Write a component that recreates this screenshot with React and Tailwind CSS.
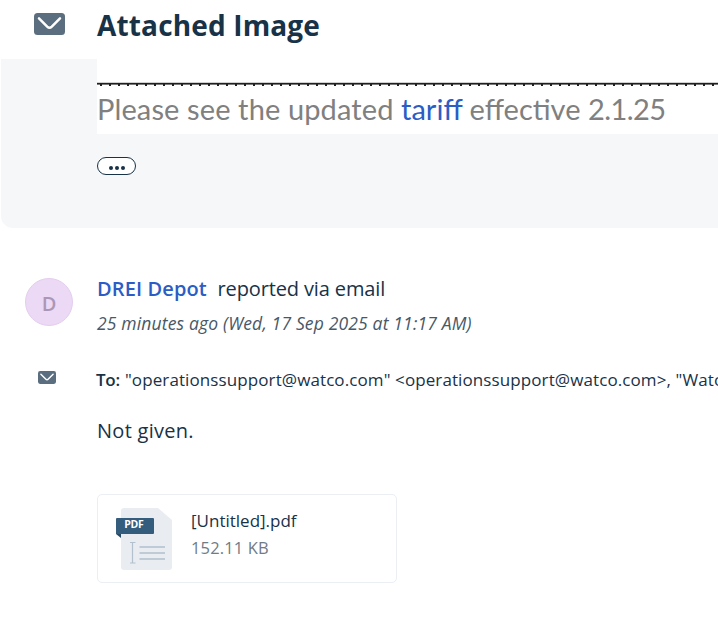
import React from "react";

function Mail({ className }) {
  return (
    <svg className={className} viewBox="0 0 31 22" fill="none">
      <rect width="31" height="22" rx="3.5" fill="#5a6e80" />
      <path d="M5 5.3 L13.2 13.6 Q15.5 15.8 17.8 13.6 L26 5.3" stroke="#fff" strokeWidth="2.5" strokeLinecap="round" />
    </svg>
  );
}

function PdfIcon() {
  return (
    <svg className="block h-[62px] w-[56px] shrink-0" viewBox="0 0 56 62" fill="none">
      <path d="M8 0 H42 L56 12 V59 Q56 62 53 62 H8 Q5 62 5 59 V3 Q5 0 8 0Z" fill="#e9edf2" />
      <path d="M0 26 H5 V30Z" fill="#264966" />
      <path d="M1 10 H37 Q38 10 38 11 V25 Q38 26 37 26 H0 V11 Q0 10 1 10Z" fill="#345c7c" />
      <path d="M14 34.5 H19.5 M16.5 34.5 V55 M14 55 H19.5" stroke="#b3c0cd" strokeWidth="1.2" />
      <path d="M23.5 39 H49 M23.5 45 H49 M23.5 51 H49" stroke="#b0becb" strokeWidth="1.6" />
      <text x="8.3" y="20" fontFamily="Open Sans, sans-serif" fontSize="10.5" fontWeight="700" fill="#fff" textLength="19.5">PDF</text>
    </svg>
  );
}

export default function App() {
  return (
    <div className="h-[622px] w-[718px] overflow-hidden whitespace-nowrap bg-white font-['Open_Sans',sans-serif] text-[#183247]">
      <header className="flex h-[59px] items-start">
        <div className="flex w-[97px] shrink-0 pl-[34px] pt-[13px]">
          <Mail className="block h-[22px] w-[31px]" />
        </div>
        <h1 className="text-[28px] leading-[50px] font-bold tracking-[0.15px]">Attached Image</h1>
      </header>

      <section className="ml-px h-[169px] rounded-bl-[12px] bg-[#f5f7f9] pl-[96px]">
        <div className="h-[75px] bg-white pt-[23px]">
          <div className="h-[4px] bg-[linear-gradient(#d0d0d0_0_1px,#231f20_1px_2px,#777_2px_3px,transparent_3px)]">
            <div className="h-full bg-[repeating-linear-gradient(90deg,transparent_0_3px,#231f20_3px_5px,transparent_5px_9px)] [clip-path:inset(2px_0_0_0)]" />
          </div>
          <p className="font-['Lato',sans-serif] text-[29px] leading-[46px] text-[#808080]">
            <span className="tracking-[0.12px]">Please see the updated </span>
            <a className="text-[#2c5cc5]">tariff</a> effective <span className="tracking-[-0.55px]">2.1.25</span>
          </p>
        </div>
        <button className="mt-[23px] flex h-[18px] w-[39px] items-center justify-center gap-[2px] rounded-full border border-[#183247] bg-white pt-[4px] pl-px">
          <i className="h-[4px] w-[4px] rounded-full bg-[#183247]" />
          <i className="h-[4px] w-[4px] rounded-full bg-[#183247]" />
          <i className="h-[4px] w-[4px] rounded-full bg-[#183247]" />
        </button>
      </section>

      <section className="pt-[44px]">
        <div className="flex">
          <div className="w-[97px] shrink-0 pl-[25px] pt-[6px]">
            <div className="flex h-[48px] w-[48px] items-center justify-center rounded-full border border-[#e5cdee] bg-[#ebd9f5] pt-[3px] text-[20px] font-semibold text-[#ab97b5]">D</div>
          </div>
          <div>
            <p className="flex text-[20px] leading-[34px]">
              <span className="w-[120.5px] font-semibold tracking-[0.12px] text-[#2c5cc5]">DREI Depot</span>
              <span className="tracking-[-0.13px]">reported via email</span>
            </p>
            <p className="text-[17.5px] leading-[35px] tracking-[0.16px] text-[#475867] italic">25 minutes ago (Wed, 17 Sep 2025 at 11:17 AM)</p>
          </div>
        </div>
        <div className="mt-[22px] flex h-[36px]">
          <div className="w-[96px] shrink-0 pl-[38px] pt-[8px]">
            <Mail className="block h-[13px] w-[18px]" />
          </div>
          <p className="flex text-[17px] leading-[34px]">
            <span className="w-[29px] font-semibold tracking-[-0.3px]">To:</span>
            <span className="tracking-[0.1px]">"operationssupport@watco.com" &lt;operationssupport@watco.com&gt;, "Watco</span>
          </p>
        </div>
        <div className="pl-[97px] pt-[14px]">
          <p className="text-[20px] leading-[36px] tracking-[0.28px]">Not given.</p>
          <div className="mt-[45px] flex h-[89px] w-[300px] rounded-[5px] border border-[#ebeff3] pt-[13px] pl-[18px]">
            <PdfIcon />
            <div className="pl-[19px]">
              <p className="text-[17px] leading-[26px]">[Untitled].pdf</p>
              <p className="text-[16.5px] leading-[28px] tracking-[0.15px] text-[#6f7c87]">152.11 KB</p>
            </div>
          </div>
        </div>
      </section>
    </div>
  );
}
